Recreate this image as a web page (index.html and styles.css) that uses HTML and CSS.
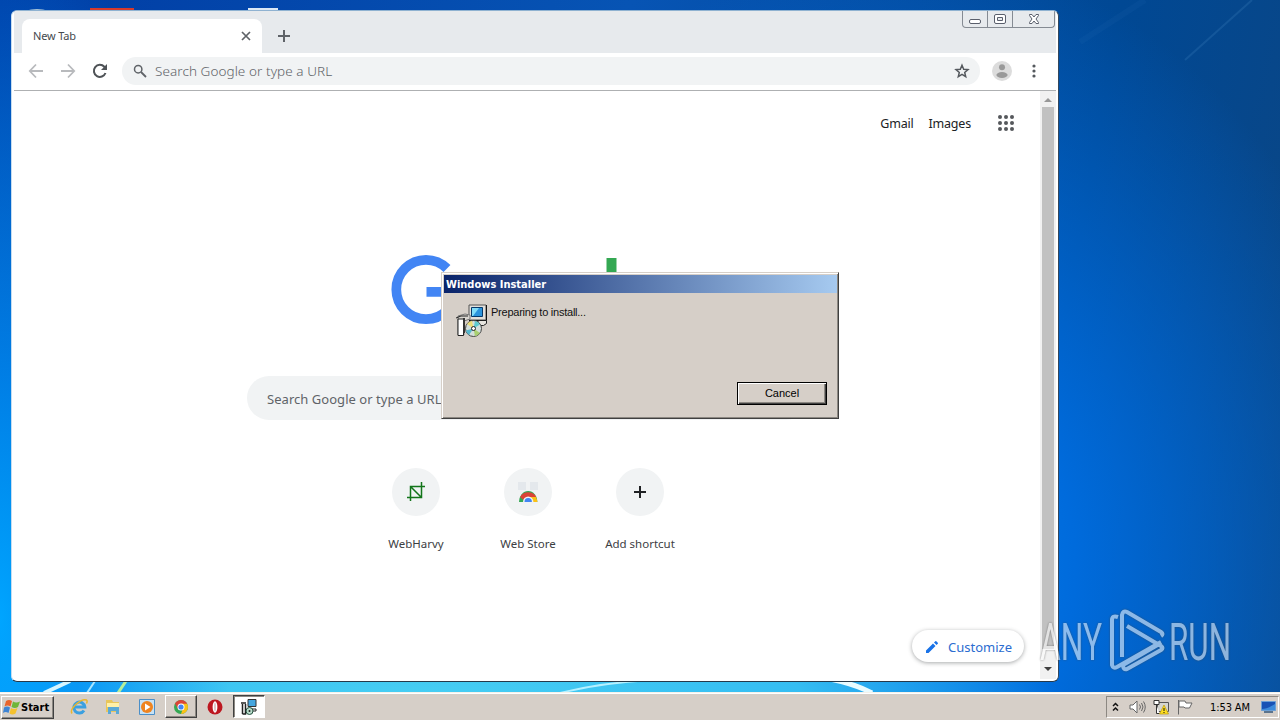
FILE: index.html
```html
<!DOCTYPE html>
<html lang="en">
<head>
  <meta charset="UTF-8">
  <meta name="viewport" content="width=device-width, initial-scale=1.0">
  <title>New Tab</title>
  <link rel="stylesheet" href="styles.css">
</head>
<body>
  <main class="desktop">
    <svg class="wallpaper" width="1280" height="693" viewBox="0 0 1280 693" fill="none">
      <path d="M1185 60L1252 0" stroke="#5b9bd0" stroke-width="2" opacity=".18"/>
      <path d="M1080 42L1145 0" stroke="#3579bd" stroke-width="6" opacity=".1"/>
      <path d="M44 693L70 681" stroke="#d6f5ff" stroke-width="4"/>
      <path d="M87 693L95 681" stroke="#a9e6ff" stroke-width="2"/>
      <path d="M118 693L126 681" stroke="#b5ee9a" stroke-width="3"/>
      <path d="M560 693Q600 683 650 680" stroke="#b5f0ff" stroke-width="2"/>
      <path d="M830 679Q855 684 872 693" stroke="#e8fbff" stroke-width="5"/>
      <path d="M25 11Q37 7 49 11" fill="#a7c4d8"/>
      <path d="M90 8h44v3H90z" fill="#d63a2c"/>
      <path d="M248 8h30v3h-30z" fill="#dbe8f5"/>
    </svg>

    <section class="browser">
      <header class="tabstrip">
        <div class="tab">
          <span>New Tab</span>
          <svg width="10" height="10" viewBox="0 0 10 10"><path d="M1 1l8 8M9 1L1 9" stroke="#5f6368" stroke-width="1.7"/></svg>
        </div>
        <svg class="new-tab" width="12" height="12" viewBox="0 0 12 12"><path d="M6 0v12M0 6h12" stroke="#5f6368" stroke-width="2"/></svg>
        <div class="controls">
          <span class="control"><svg width="14" height="16" viewBox="0 0 14 16"><rect x="1.500" y="8.500" width="11" height="4" rx="1.500" fill="#fff" stroke="#5a5f6c"/></svg></span>
          <span class="control"><svg width="14" height="16" viewBox="0 0 14 16"><rect x="1.500" y="3.500" width="11" height="9" rx="1.500" fill="#fff" stroke="#5a5f6c"/><path d="M4.500 6.500h5v3h-5z" fill="#e7eaed" stroke="#5a5f6c"/></svg></span>
          <span class="control control-close"><svg width="14" height="16" viewBox="0 0 14 16"><path d="M2.500 3.500h2.500l2 2.500 2-2.500h2.500v1L9 8l2.500 3.500v1H9L7 10l-2 2.500H2.500v-1L5 8 2.500 4.500z" fill="#fff" stroke="#5a5f6c"/></svg></span>
        </div>
      </header>

      <div class="toolbar">
        <svg class="nav-icon" width="16" height="16" viewBox="0 0 16 16"><path d="M15 8H2M8 1.500L1.800 8 8 14.500" fill="none" stroke="#b8babd" stroke-width="1.800"/></svg>
        <svg class="nav-icon" width="16" height="16" viewBox="0 0 16 16"><path d="M1 8h13M8 1.500L14.200 8 8 14.500" fill="none" stroke="#b8babd" stroke-width="1.800"/></svg>
        <svg class="nav-icon" width="16" height="16" viewBox="0 0 16 16"><path d="M13.500 10A6 6 0 1 1 12.300 3.800L14 5.500" fill="none" stroke="#4f5357" stroke-width="2"/><path d="M15 1v6H9z" fill="#4f5357"/></svg>
        <div class="omnibox">
          <svg width="14" height="14" viewBox="0 0 14 14"><circle cx="5.200" cy="5.200" r="3.700" fill="none" stroke="#5f6368" stroke-width="1.500"/><path d="M8 8l5 5" stroke="#5f6368" stroke-width="1.800"/></svg>
          <span class="omnibox-text">Search Google or type a URL</span>
          <svg class="star" width="16" height="16" viewBox="0 0 16 16"><path d="M8 2.200l1.700 4 4.300.4-3.300 2.800 1 4.200L8 11.400l-3.700 2.200 1-4.200L2 6.600l4.300-.4z" fill="none" stroke="#55595e" stroke-width="1.500"/></svg>
        </div>
        <svg class="avatar" width="20" height="20" viewBox="0 0 20 20"><circle cx="10" cy="10" r="10" fill="#dcdcdc"/><circle cx="10" cy="6.200" r="3" fill="#999"/><ellipse cx="10" cy="14" rx="5.600" ry="2.900" fill="#999"/></svg>
        <svg class="menu-dots" width="4" height="14" viewBox="0 0 4 14" fill="#55595e"><circle cx="2" cy="2" r="1.600"/><circle cx="2" cy="7" r="1.600"/><circle cx="2" cy="12" r="1.600"/></svg>
      </div>

      <div class="page-row">
        <div class="page">
          <nav class="google-bar">
            <span class="gmail">Gmail</span>
            <span class="images">Images</span>
            <svg width="16" height="16" viewBox="0 0 16 16" fill="#55585c"><circle cx="2" cy="2" r="2"/><circle cx="8" cy="2" r="2"/><circle cx="14" cy="2" r="2"/><circle cx="2" cy="8" r="2"/><circle cx="8" cy="8" r="2"/><circle cx="14" cy="8" r="2"/><circle cx="2" cy="14" r="2"/><circle cx="8" cy="14" r="2"/><circle cx="14" cy="14" r="2"/></svg>
          </nav>
          <svg class="logo" width="272" height="92" viewBox="0 0 272 92">
            <path d="M56 18.500A29.700 29.700 0 1 0 56 60.500Q64 52 64 41.800H35.500" fill="none" stroke="#4285f4" stroke-width="9.700"/>
            <path d="M215.500 8h10v63h-10z" fill="#34a853"/>
          </svg>
          <div class="search"><span>Search Google or type a URL</span></div>
          <div class="shortcuts">
            <div class="shortcut">
              <span class="tile"><svg width="20" height="20" viewBox="0 0 20 20"><path d="M1 15.500h14.500V0M4.500 19V4.500H19M4.500 4.500l11 11" fill="none" stroke="#13751a" stroke-width="1.500"/></svg></span>
              <span>WebHarvy</span>
            </div>
            <div class="shortcut">
              <span class="tile"><svg width="24" height="24" viewBox="0 0 24 24"><path d="M2 2h8v8H2zM14 2h8v8h-8z" fill="#e4e8ec"/><path d="M3 22a9.200 11 0 0 1 18.400 0z" fill="#34a853"/><path d="M21.400 22a9 11 0 0 0-4-8L12 17v5z" fill="#fbc116"/><path d="M4 17a9 8 0 0 1 16.400 0h-8L7.500 20z" fill="#db4437"/><path d="M7 22a5.200 5.500 0 0 1 10.400 0z" fill="#f1f3f4"/><path d="M8.500 22a3.700 4 0 0 1 7.400 0z" fill="#4285f4"/></svg></span>
              <span>Web Store</span>
            </div>
            <div class="shortcut">
              <span class="tile"><svg width="12" height="12" viewBox="0 0 12 12"><path d="M6 0v12M0 6h12" stroke="#202124" stroke-width="2"/></svg></span>
              <span>Add shortcut</span>
            </div>
          </div>
          <div class="customize">
            <svg width="14" height="14" viewBox="0 0 14 14" fill="#1a73e8"><path d="M1 10.500V13h2.500l7-7L8 3.500zM9 2.500L11.500 5l1.300-1.300q.5-.5 0-1L11.300 1.200q-.5-.5-1 0z"/></svg>
            <span>Customize</span>
          </div>
        </div>
        <div class="scrollbar">
          <svg width="8" height="4" viewBox="0 0 8 4"><path d="M0 4l4-4 4 4z" fill="#989898"/></svg>
          <div class="thumb"></div>
          <svg width="8" height="4" viewBox="0 0 8 4"><path d="M0 0l4 4 4-4z" fill="#404040"/></svg>
        </div>
      </div>
    </section>

    <section class="dialog">
      <h1 class="dialog-title">Windows Installer</h1>
      <div class="dialog-body">
        <svg width="32" height="34" viewBox="0 0 32 34">
          <path d="M13 1h17v15H13z" fill="#e2dfda" stroke="#555"/>
          <path d="M30.500 1v15.500H13" fill="none" stroke="#111"/>
          <path d="M15.500 3.500h11v9h-11z" fill="#2a93dc" stroke="#063868"/>
          <path d="M16 4h7l-6 8h-1z" fill="#80dcf8"/>
          <path d="M22 16.500h8.500v3l-3 2H22z" fill="#e8e6e0" stroke="#222"/>
          <path d="M2 12l7-2 5 1v4L8 17v14H2z" fill="#d8d5cf" stroke="#777"/>
          <path d="M2 15h5.500v16.500H2z" fill="#fff" stroke="#222"/>
          <path d="M8 14v15" stroke="#333" stroke-width="2"/>
          <path d="M0 14l5-2h7" fill="none" stroke="#222"/>
          <circle cx="17.500" cy="24.500" r="8" fill="#d4dfdc" stroke="#444"/>
          <path d="M17.500 24.500L11 20a8 8 0 0 1 5-3.300z" fill="#eddf78"/>
          <path d="M17.500 24.500L19 17a8 8 0 0 1 5 3.500z" fill="#5fcbd0"/>
          <path d="M17.500 24.500L13 31a8 8 0 0 1-3.200-4.500z" fill="#55b7cd"/>
          <path d="M17.500 24.500L24 29a8 8 0 0 1-5 3.200z" fill="#a9cf70"/>
          <circle cx="17.500" cy="24.500" r="2" fill="#fff" stroke="#222"/>
        </svg>
        <p class="dialog-text">Preparing to install...</p>
      </div>
      <button class="cancel"><span>Cancel</span></button>
    </section>

    <svg class="watermark" width="240" height="80" viewBox="0 0 240 80">
      <g fill="#fff">
        <text x="2" y="52" textLength="62" lengthAdjust="spacingAndGlyphs">ANY</text>
        <text x="131" y="52" textLength="62" lengthAdjust="spacingAndGlyphs">RUN</text>
      </g>
      <g fill="none" stroke="#fff" stroke-width="4" stroke-linejoin="round">
        <path d="M80 9q-6-2-6 3v45q1 4 5 2l44-25"/>
        <path d="M84 49V7q1-5 5-3l34 20q3 2 0 4"/>
        <path d="M89 18l34 20q3 2 0 4L89 61q-4 1-4-4l38-22"/>
      </g>
    </svg>
  </main>

  <footer class="taskbar">
    <button class="start">
      <svg width="18" height="16" viewBox="0 0 18 16"><path d="M3 2q3-2 6 0L7.500 7.500q-3-2-6 0z" fill="#e8632b"/><path d="M10 2.500q3 2 7 0l-2 5.500q-3 2-6.500 0z" fill="#6fb63a"/><path d="M1 8.500q3-2 6 0L5.500 14q-3-2-5.500 0z" fill="#3e84d4"/><path d="M8 9q3 2 6.500 0l-2 5.500q-3 2-6 0z" fill="#f5c22e"/></svg>
      <span>Start</span>
    </button>
    <div class="quick">
      <span class="task"><svg width="18" height="18" viewBox="0 0 18 18" fill="none"><path d="M14 12.500a5.500 5.500 0 1 1 .8-3.500H4" stroke="#3ba0e0" stroke-width="3"/><path d="M2 15.500C-1 11 11 0 16.500 2q1.200 1 0 3.500" stroke="#e9b62d" stroke-width="1.500"/></svg></span>
      <span class="task"><svg width="18" height="18" viewBox="0 0 18 18"><path d="M2 2h6l1 2h6v10H2z" fill="#e8c65c"/><path d="M3 5h12v4H3z" fill="#fff0a8"/><path d="M4 16V9h11v7h-3v-3H7v3z" fill="#5ba9d6"/></svg></span>
      <span class="task"><svg width="18" height="18" viewBox="0 0 18 18"><path d="M1.500 1.500h15v15h-15z" fill="#c7e2f5" stroke="#4b8fc8"/><circle cx="9" cy="9" r="6" fill="#ef8420"/><path d="M7 5.500v7L12.500 9z" fill="#fff"/></svg></span>
      <span class="task raised"><svg width="14" height="14" viewBox="0 0 14 14"><circle cx="7" cy="7" r="7" fill="#34a853"/><path d="M1 3.400A7 7 0 0 1 13.100 3.700L7 7z" fill="#db4437"/><path d="M13.100 3.700A7 7 0 0 1 7 14l2-6-2-4.300z" fill="#fbc116"/><path d="M1 3.400h6V7L4 9z" fill="#db4437"/><circle cx="7" cy="7" r="3.500" fill="#fff"/><circle cx="7" cy="7" r="2.600" fill="#4285f4"/></svg></span>
      <span class="task"><svg width="16" height="16" viewBox="0 0 16 16"><circle cx="8" cy="8" r="7.500" fill="#bd1720"/><ellipse cx="8" cy="8" rx="2.400" ry="5.700" fill="#fff"/><ellipse cx="8" cy="8" rx=".6" ry="4.500" fill="#c9a0a0"/></svg></span>
      <span class="task pressed"><svg width="18" height="18" viewBox="0 0 18 18"><path d="M8 1.500h8v7H8z" fill="#45a6df" stroke="#333"/><path d="M9 11h7v2h-4" fill="none" stroke="#222"/><path d="M1 5h5M2.500 6v10M5.500 6v10h-3" fill="none" stroke="#222" stroke-width="1.500"/><circle cx="9.500" cy="13" r="3.500" fill="#b9ddcb" stroke="#234f3e"/><circle cx="9.500" cy="13" r="1" fill="#222"/></svg></span>
    </div>
    <div class="tray">
      <svg class="chevrons" width="7" height="10" viewBox="0 0 7 10" fill="none" stroke="#111" stroke-width="1.500"><path d="M1 4l2.500-2.500L6 4M1 8.500L3.500 6 6 8.500"/></svg>
      <svg class="speaker" width="17" height="14" viewBox="0 0 17 14" fill="none" stroke="#666"><path d="M1 5h3l4-4v12L4 9H1z" fill="#fff"/><path d="M10.500 4.500q2 2.500 0 5M12.500 3q3 4 0 8M14.500 1.500q3.500 5.500 0 11"/></svg>
      <svg class="network" width="16" height="16" viewBox="0 0 16 16"><path d="M4.500 3.500h11v9h-11z" fill="#d5d5d0" stroke="#555"/><path d="M1 1.500h5v4H1zM3.500 5.500v9h3" fill="#fff" stroke="#333"/><path d="M11 6l4.500 9h-9z" fill="#ffdf20" stroke="#b9960a" stroke-width=".7"/><path d="M11 9v3M11 13v1" stroke="#111"/></svg>
      <svg class="flag" width="16" height="16" viewBox="0 0 16 16"><path d="M1.500 1v14.500M2 2h6l1 2h6l-2.500 5H8L7 8H2z" fill="#fff" stroke="#666"/></svg>
      <time class="clock">1:53 AM</time>
      <svg class="monitor" width="15" height="13" viewBox="0 0 15 13"><path d="M.5.500h14v9H.500z" fill="#1852b5" stroke="#6b9fd5"/><path d="M1 8Q6 8 14 3v6H1z" fill="#3c8bdb"/><path d="M3 10h9v2H3z" fill="#5c748d"/></svg>
    </div>
  </footer>
</body>
</html>
```

FILE: styles.css
```css
* {
  box-sizing: border-box;
}

body {
  margin: 0;
  width: 1280px;
  height: 720px;
  overflow: hidden;
  display: flex;
  flex-direction: column;
  font-family: "Noto Sans", sans-serif;
}

svg {
  display: block;
  flex: none;
}

span,
time {
  white-space: nowrap;
}

.desktop {
  position: relative;
  height: 692px;
  flex: none;
  overflow: hidden;
  background:
    radial-gradient(ellipse 230px 700px at 0 620px, #00a5ff 0, rgba(0, 142, 245, 0.8) 35%, transparent 100%),
    radial-gradient(ellipse 640px 130px at 420px 700px, #48cff3 0, #35bdf2 60%, transparent 100%),
    radial-gradient(ellipse 500px 620px at 900px 570px, #0080f0 0, #006bdc 35%, transparent 100%),
    linear-gradient(100deg, #003ca4 0, #0754b4 45%, #004894 80%, #0c4683 100%);
}

.wallpaper {
  position: absolute;
  inset: 0;
}

/* Browser window */
.browser {
  position: absolute;
  left: 11px;
  top: 10px;
  width: 1048px;
  height: 672px;
  display: flex;
  flex-direction: column;
  background: #fff;
  border: 1px solid #33475c;
  border-color: #8fb2d1 #33475c #26394a #c5dcf0;
  border-radius: 6px;
  padding: 0 2px 2px;
  overflow: hidden;
}

.tabstrip {
  height: 42px;
  flex: none;
  display: flex;
  align-items: flex-start;
  background: #e7eaed;
}

.tab {
  margin: 8px 0 0 8px;
  width: 240px;
  height: 34px;
  padding: 0 11px;
  display: flex;
  align-items: center;
  justify-content: space-between;
  background: #fff;
  border-radius: 8px 8px 0 0;
  box-shadow: -9px 26px 0 -8px #fff, 9px 26px 0 -8px #fff;
  font-size: 11px;
  line-height: 14px;
  letter-spacing: -0.15px;
  color: #45494d;
}

.new-tab {
  margin: 19px 0 0 16px;
}

.controls {
  display: flex;
  margin: 0 1px 0 auto;
  height: 17px;
  border: 1px solid #858b93;
  border-top: 0;
  border-radius: 0 0 4px 4px;
}

.control {
  width: 25px;
  display: flex;
  justify-content: center;
  border-right: 1px solid #858b93;
}

.control-close {
  width: 41px;
  border-right: 0;
}

.toolbar {
  height: 38px;
  flex: none;
  display: flex;
  align-items: center;
  padding: 0 20px 1px 14px;
  border-bottom: 1px solid #aeb0b2;
}

.nav-icon {
  margin-right: 16px;
}

.omnibox {
  flex: 1;
  height: 28px;
  margin-left: -2px;
  padding: 0 10px 0 11px;
  display: flex;
  align-items: center;
  background: #f1f3f4;
  border-radius: 14px;
}

.omnibox-text {
  margin-left: 8px;
  font-size: 13.5px;
  font-weight: 300;
  letter-spacing: 0.07px;
  color: #5f6368;
}

.star {
  margin-left: auto;
}

.avatar {
  margin: 0 20px 0 12px;
}

.page-row {
  flex: 1;
  display: flex;
  min-height: 0;
}

.page {
  flex: 1;
  display: flex;
  flex-direction: column;
}

.google-bar {
  display: flex;
  align-items: center;
  justify-content: flex-end;
  height: 64px;
  padding-right: 26px;
  font-size: 12.5px;
  letter-spacing: -0.2px;
  color: #202124;
}

.images {
  margin: 0 27px 0 15px;
}

.logo {
  margin: 95px 0 0 377px;
}

.search {
  width: 561px;
  height: 44px;
  margin: 34px 0 0 233px;
  padding: 2px 20px 0;
  display: flex;
  align-items: center;
  background: #f1f3f4;
  border-radius: 22px;
  font-size: 13px;
  letter-spacing: 0.04px;
  color: #5f6368;
}

.shortcuts {
  display: flex;
  margin: 48px 0 0 346px;
}

.shortcut {
  width: 112px;
  display: flex;
  flex-direction: column;
  align-items: center;
  font-size: 11.5px;
  line-height: 16px;
  color: #3c4043;
}

.tile {
  width: 48px;
  height: 48px;
  margin-bottom: 20px;
  display: flex;
  align-items: center;
  justify-content: center;
  background: #f1f3f4;
  border-radius: 50%;
}

.customize {
  align-self: flex-end;
  width: 112px;
  height: 32px;
  margin: auto 16px 17px 0;
  padding: 2px 0 0 13px;
  display: flex;
  align-items: center;
  gap: 9px;
  border-radius: 16px;
  box-shadow: 0 1px 4px rgba(60, 64, 67, 0.45);
  font-size: 13px;
  color: #2b6cd0;
}

.scrollbar {
  width: 16px;
  display: flex;
  flex-direction: column;
  align-items: center;
  padding: 7px 0 8px;
  background: #f1f1f1;
}

.thumb {
  flex: 1;
  width: 12px;
  margin: 5px 0 18px;
  background: #c1c1c1;
}

/* Installer dialog */
.dialog {
  position: absolute;
  left: 441px;
  top: 272px;
  width: 398px;
  height: 147px;
  display: flex;
  flex-direction: column;
  padding: 1px 0 0 1px;
  background: #d6cfc8;
  border: 1px solid #404040;
  border-color: #d6cfc8 #404040 #404040 #d6cfc8;
  box-shadow: inset 1px 1px #fff, inset -1px -1px #8c8882;
}

.dialog-title {
  margin: 1px 1px 0;
  height: 18px;
  padding-left: 2px;
  background: linear-gradient(to right, #0a246a, #a6caf0);
  color: #fff;
  font: bold 11px/19px "DejaVu Sans Condensed", "DejaVu Sans", sans-serif;
}

.dialog-body {
  display: flex;
  padding: 11px 0 0 13px;
}

.dialog-text {
  margin: 0 0 0 3px;
  font: 11px/16px "Liberation Sans", sans-serif;
  letter-spacing: -0.24px;
  color: #111;
}

.cancel {
  align-self: flex-end;
  width: 90px;
  height: 23px;
  margin: auto 11px 13px 0;
  padding: 0 0 2px;
  background: #d6cfc8;
  border: 1px solid #000;
  border-radius: 0;
  box-shadow: inset 1px 1px #fff, inset -1px -1px #404040, inset -2px -2px #8c8882;
  font: 11px "Liberation Sans", sans-serif;
}

.watermark {
  position: absolute;
  left: 1038px;
  top: 608px;
  overflow: visible;
  opacity: 0.55;
  filter: drop-shadow(0 0 1px #444);
  font: 400 51px "Roboto", sans-serif;
}

/* Taskbar */
.taskbar {
  height: 28px;
  flex: none;
  display: flex;
  align-items: flex-start;
  padding: 2px 1px 0;
  background: #d6cfc8;
  border-top: 1px solid #f5f2ea;
  box-shadow: inset 0 1px #fff;
}

.start {
  width: 53px;
  height: 23px;
  margin-top: 1px;
  padding: 0 0 1px 1px;
  display: flex;
  align-items: center;
  background: #d6cfc8;
  border: 1px solid #fff;
  border-color: #fff #404040 #404040 #fff;
  box-shadow: inset -1px -1px #8c8882;
  font: bold 11px "DejaVu Sans Condensed", "DejaVu Sans", sans-serif;
}

.quick {
  display: flex;
  margin-left: 8px;
}

.task {
  width: 34px;
  height: 24px;
  display: flex;
  align-items: center;
  justify-content: center;
}

.raised,
.pressed {
  width: 32px;
  height: 23px;
  margin: 0 1px;
  border: 1px solid #fff;
  border-color: #fff #404040 #404040 #fff;
  box-shadow: inset -1px -1px #8c8882;
}

.pressed {
  background: #fff;
  border-color: #404040 #fff #fff #404040;
  box-shadow: inset 1px 1px #8c8882;
}

.tray {
  width: 173px;
  height: 22px;
  margin: 1px 0 0 auto;
  display: flex;
  align-items: center;
  border: 1px solid #8c8882;
  border-color: #8c8882 #fff #fff #8c8882;
}

.chevrons {
  margin-left: 5px;
}

.speaker {
  margin-left: 10px;
}

.network {
  margin-left: 7px;
}

.flag {
  margin-left: 8px;
}

.clock {
  margin-left: 17px;
  font: 11px "DejaVu Sans Condensed", "DejaVu Sans", sans-serif;
  letter-spacing: -0.1px;
}

.monitor {
  margin-left: auto;
  margin-right: 2px;
}
```
